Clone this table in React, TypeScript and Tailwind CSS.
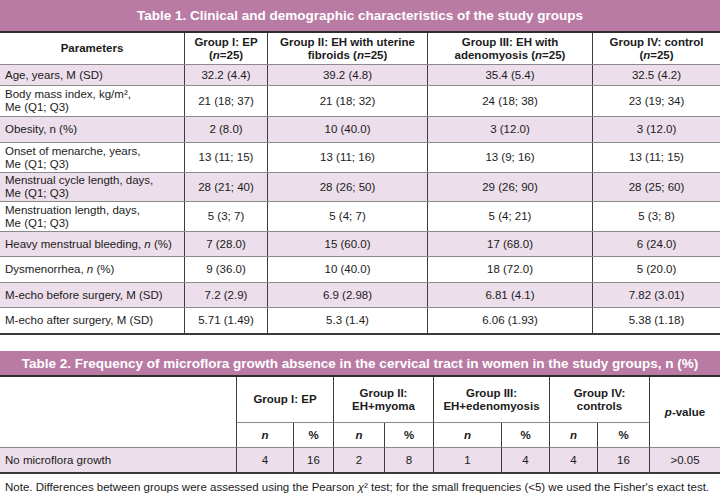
import React from "react";

const font = { fontFamily: '"Liberation Sans", Arial, sans-serif' };

type Row = { label: React.ReactNode; vals: string[]; h: string; shade: boolean };

const rows: Row[] = [
  { label: <>Age, years, M (SD)</>, vals: ["32.2 (4.4)", "39.2 (4.8)", "35.4 (5.4)", "32.5 (4.2)"], h: "h-[21px]", shade: true },
  { label: <>Body mass index, kg/m²,<br />Me (Q1; Q3)</>, vals: ["21 (18; 37)", "21 (18; 32)", "24 (18; 38)", "23 (19; 34)"], h: "h-[31px]", shade: false },
  { label: <>Obesity, n (%)</>, vals: ["2 (8.0)", "10 (40.0)", "3 (12.0)", "3 (12.0)"], h: "h-[26px]", shade: true },
  { label: <>Onset of menarche, years,<br />Me (Q1; Q3)</>, vals: ["13 (11; 15)", "13 (11; 16)", "13 (9; 16)", "13 (11; 15)"], h: "h-[30px]", shade: false },
  { label: <>Menstrual cycle length, days,<br />Me (Q1; Q3)</>, vals: ["28 (21; 40)", "28 (26; 50)", "29 (26; 90)", "28 (25; 60)"], h: "h-[29px]", shade: true },
  { label: <>Menstruation length, days,<br />Me (Q1; Q3)</>, vals: ["5 (3; 7)", "5 (4; 7)", "5 (4; 21)", "5 (3; 8)"], h: "h-[30px]", shade: false },
  { label: <>Heavy menstrual bleeding, <i>n</i> (%)</>, vals: ["7 (28.0)", "15 (60.0)", "17 (68.0)", "6 (24.0)"], h: "h-[25px]", shade: true },
  { label: <>Dysmenorrhea, <i>n</i> (%)</>, vals: ["9 (36.0)", "10 (40.0)", "18 (72.0)", "5 (20.0)"], h: "h-[26px]", shade: false },
  { label: <>M-echo before surgery, M (SD)</>, vals: ["7.2 (2.9)", "6.9 (2.98)", "6.81 (4.1)", "7.82 (3.01)"], h: "h-[25px]", shade: true },
  { label: <>M-echo after surgery, M (SD)</>, vals: ["5.71 (1.49)", "5.3 (1.4)", "6.06 (1.93)", "5.38 (1.18)"], h: "h-[27px]", shade: false },
];

const cols1 = "grid grid-cols-[184px_83px_160px_165px_128px]";

export default function App() {
  return (
    <div className="w-[720px] h-[497px] bg-white text-[#1b1b1b] text-[11.5px] leading-[13px] overflow-hidden" style={font}>
      {/* Table 1 */}
      <div className="h-[33px] bg-[#b97ba4] border-b-2 border-[#2e2e2e] flex items-center justify-center text-white font-bold text-[13.5px]">
        Table 1. Clinical and demographic characteristics of the study groups
      </div>
      <div className={`${cols1} h-[32px] border-b border-[#8a8a8a] font-bold`}>
        <div className="flex items-center justify-center">Parameters</div>
        <div className="flex items-center justify-center text-center border-l border-[#3c3c3c]">
          <span>Group I: EP<br />(<i>n</i>=25)</span>
        </div>
        <div className="flex items-center justify-center text-center border-l border-[#3c3c3c]">
          <span>Group II: EH with uterine<br />fibroids (<i>n</i>=25)</span>
        </div>
        <div className="flex items-center justify-center text-center border-l border-[#3c3c3c]">
          <span>Group III: EH with<br />adenomyosis (<i>n</i>=25)</span>
        </div>
        <div className="flex items-center justify-center text-center border-l border-[#3c3c3c]">
          <span>Group IV: control<br />(<i>n</i>=25)</span>
        </div>
      </div>
      {rows.map((r, i) => (
        <div
          key={i}
          className={`${cols1} ${r.h} ${i === rows.length - 1 ? "border-b-2 border-[#3a3a3a]" : "border-b border-[#8a8a8a]"} ${r.shade ? "bg-[#ecdeea]" : "bg-white"}`}
        >
          <div className="flex items-center pl-[5px]">
            <span>{r.label}</span>
          </div>
          {r.vals.map((v, j) => (
            <div key={j} className="flex items-center justify-center border-l border-[#3c3c3c]">
              {v}
            </div>
          ))}
        </div>
      ))}

      {/* Table 2 */}
      <div className="mt-[16px] h-[26px] bg-[#b97ba4] border-b-2 border-[#2e2e2e] flex items-center justify-center text-white font-bold text-[13.5px]">
        Table 2. Frequency of microflora growth absence in the cervical tract in women in the study groups, n (%)
      </div>
      <div className="grid grid-cols-[237px_57px_40px_51px_49px_68px_48px_48px_52px_70px] grid-rows-[46px_25px_26px] font-bold">
        <div className="row-span-2 border-r border-[#3c3c3c] border-b border-b-[#8a8a8a]"></div>
        <div className="col-span-2 flex items-center justify-center text-center border-r border-[#3c3c3c] border-b border-b-[#8a8a8a]"><span>Group I: EP</span></div>
        <div className="col-span-2 flex items-center justify-center text-center border-r border-[#3c3c3c] border-b border-b-[#8a8a8a]"><span>Group II:<br />EH+myoma</span></div>
        <div className="col-span-2 flex items-center justify-center text-center border-r border-[#3c3c3c] border-b border-b-[#8a8a8a]"><span>Group III:<br />EH+edenomyosis</span></div>
        <div className="col-span-2 flex items-center justify-center text-center border-r border-[#3c3c3c] border-b border-b-[#8a8a8a]"><span>Group IV:<br />controls</span></div>
        <div className="row-span-2 flex items-center justify-center border-b border-[#8a8a8a]"><span><i>p</i>-value</span></div>
        {["n", "%", "n", "%", "n", "%", "n", "%"].map((t, i) => (
          <div key={i} className="flex items-center justify-center border-r border-[#3c3c3c] border-b border-b-[#8a8a8a]">
            {t === "n" ? <i>n</i> : t}
          </div>
        ))}
        <div className="flex items-center pl-[5px] font-normal bg-[#ecdeea] border-r border-[#3c3c3c] border-b-2 border-b-[#3a3a3a]">No microflora growth</div>
        {["4", "16", "2", "8", "1", "4", "4", "16"].map((t, i) => (
          <div key={i} className="flex items-center justify-center font-normal bg-[#ecdeea] border-r border-[#3c3c3c] border-b-2 border-b-[#3a3a3a]">
            {t}
          </div>
        ))}
        <div className="flex items-center justify-center font-normal bg-[#ecdeea] border-b-2 border-[#3a3a3a]">&gt;0.05</div>
      </div>
      <div className="pt-[6px] pl-[5px] leading-[14px]">
        Note. Differences between groups were assessed using the Pearson <i>χ</i>² test; for the small frequencies (&lt;5) we used the Fisher's exact test.
      </div>
    </div>
  );
}
